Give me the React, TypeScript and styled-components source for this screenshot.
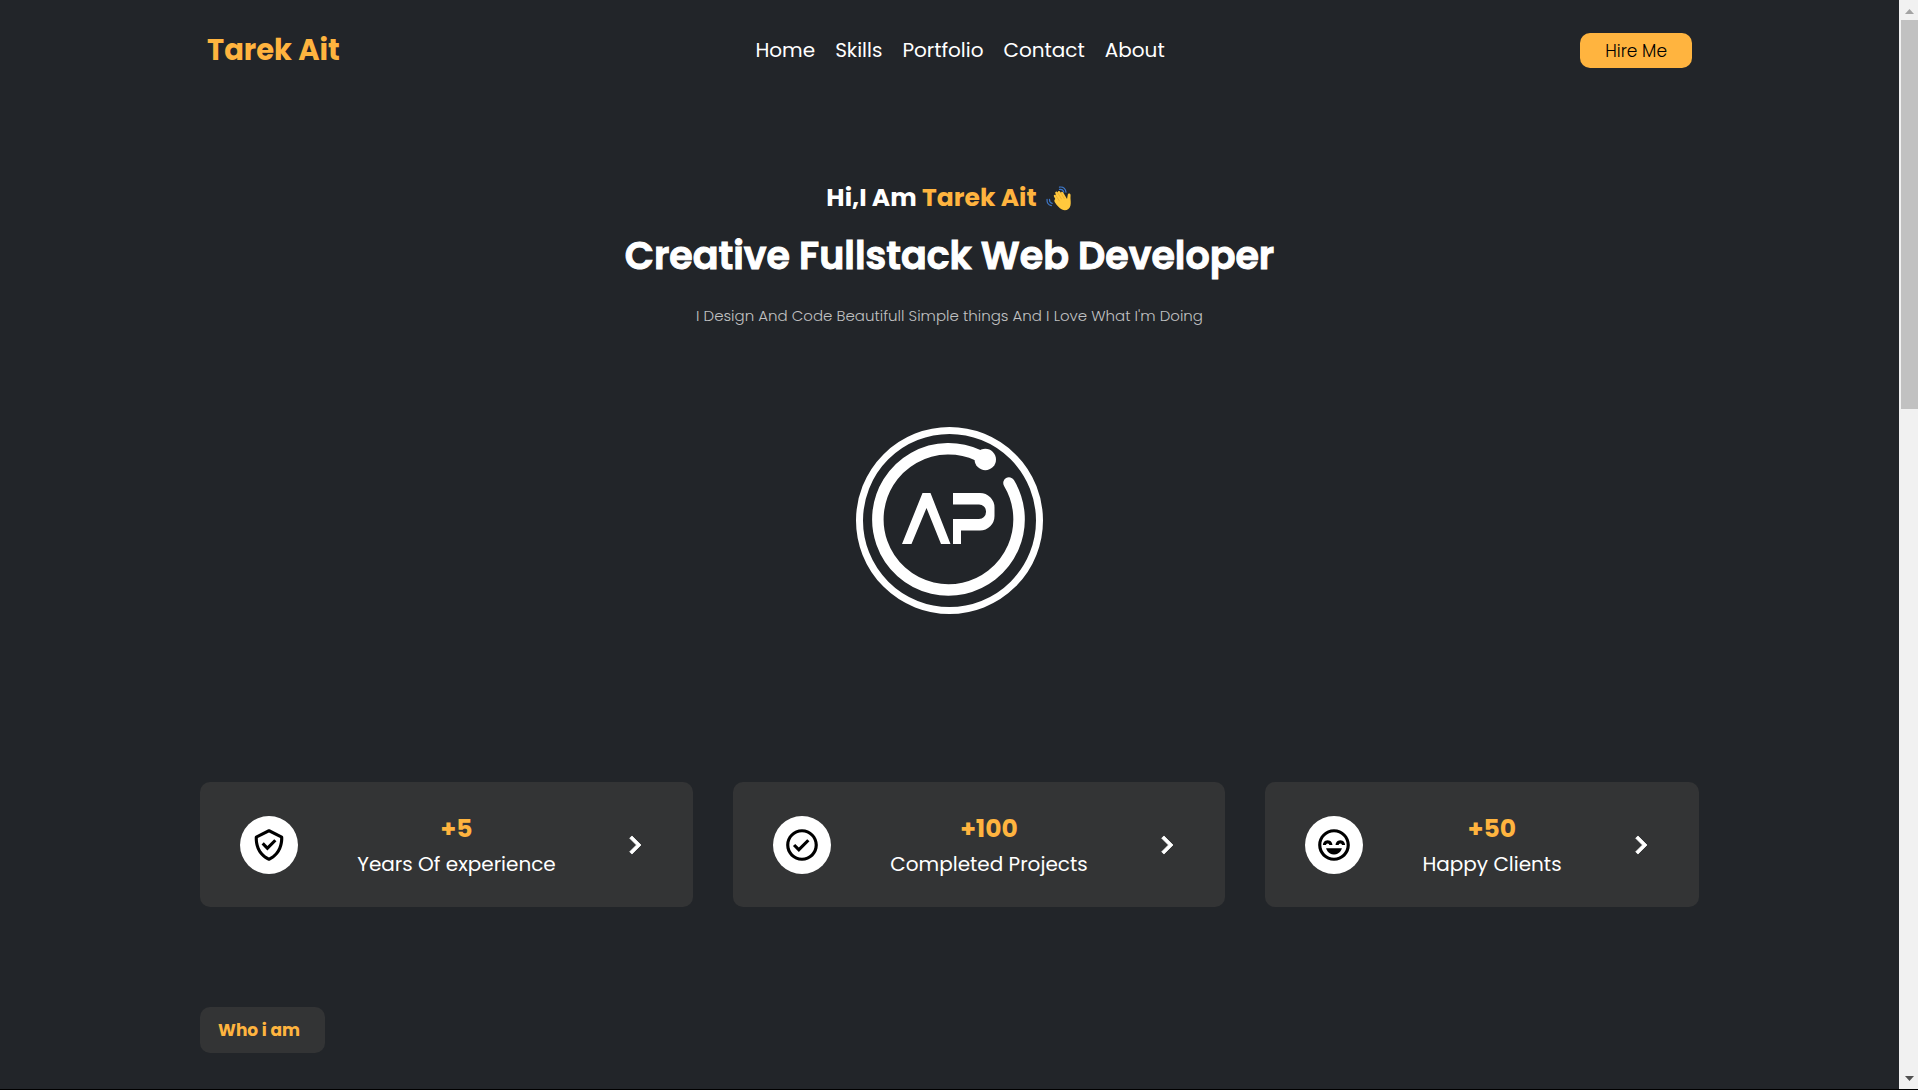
import React from "react";
import styled, { createGlobalStyle } from "styled-components";
import { BiCheckCircle, BiCheckShield, BiChevronRight, BiHappyBeaming } from "react-icons/bi";

const accent = "#ffb43f";

const GlobalStyle = createGlobalStyle`
  *, *::before, *::after { box-sizing: border-box; }
  body {
    margin: 0;
    background: #222529;
    color: #fff;
    font-family: Poppins, Inter, sans-serif;
  }
  h1, h2, p, ul { margin: 0; padding: 0; }
`;

const Shell = styled.div`
  display: flex;
  height: 100vh;
  overflow: hidden;
  border-bottom: 1px solid #000;
`;

const Page = styled.div`
  flex: 1;
  min-width: 0;
  padding: 0 200px;
`;

const Header = styled.header`
  display: flex;
  align-items: center;
  justify-content: space-between;
  height: 100px;
  padding: 0 7px;
`;

const Brand = styled.a`
  color: ${accent};
  font-size: 29px;
  font-weight: 700;
  text-decoration: none;
`;

const NavList = styled.ul`
  display: flex;
  gap: 20px;
  list-style: none;
`;

const NavLink = styled.a`
  color: #fff;
  font-size: 20px;
  text-decoration: none;
`;

const HireButton = styled.button`
  height: 35px;
  padding: 1px 25px 0;
  border: 0;
  border-radius: 10px;
  background: ${accent};
  color: #000;
  font: inherit;
  font-size: 17px;
  font-weight: 300;
`;

const Hero = styled.section`
  display: flex;
  flex-direction: column;
  align-items: center;
  padding-top: 78px;
  text-align: center;
`;

const Greeting = styled.p`
  display: flex;
  align-items: center;
  gap: 8px;
  font-size: 25px;
  line-height: 40px;
  font-weight: 700;
`;

const Name = styled.span`
  color: ${accent};
`;

const Title = styled.h1`
  margin-top: 8px;
  font-size: 38px;
  line-height: 60px;
  font-weight: 600;
  -webkit-text-stroke: 1px currentColor;
`;

const Tagline = styled.p`
  margin-top: 18px;
  color: #c0c1c2;
  font-size: 15px;
  line-height: 24px;
  font-weight: 300;
`;

const LogoMark = styled.svg`
  width: 188px;
  height: 188px;
  margin-top: 99px;
`;

const Stats = styled.section`
  display: grid;
  grid-template-columns: 493fr 492fr 434fr;
  gap: 40px;
  margin-top: 167px;
`;

const StatCard = styled.article`
  display: flex;
  align-items: center;
  justify-content: space-between;
  height: 125px;
  padding: 0 40px;
  border-radius: 10px;
  background: #333435;
`;

const IconDisc = styled.span`
  display: grid;
  place-items: center;
  width: 58px;
  height: 58px;
  border-radius: 50%;
  background: #fff;
  color: #000;
`;

const StatText = styled.div`
  text-align: center;
`;

const StatValue = styled.h2`
  color: ${accent};
  font-size: 25px;
  line-height: 38px;
  font-weight: 700;
`;

const StatLabel = styled.p`
  font-size: 20px;
  line-height: 32px;
`;

const Chevron = styled(BiChevronRight)`
  stroke: currentColor;
  stroke-width: 0.5px;
`;

const SectionTag = styled.h2`
  width: max-content;
  margin-top: 100px;
  padding: 0 25px 0 18px;
  border-radius: 10px;
  background: #333435;
  color: ${accent};
  font-size: 17px;
  line-height: 46px;
  font-weight: 700;
`;

const ScrollTrack = styled.div`
  display: flex;
  flex-direction: column;
  justify-content: space-between;
  width: 19px;
  padding-left: 2px;
  background: #f1f1f1;
`;

const ScrollArrow = styled.svg`
  width: 17px;
  height: 20px;
`;

const ScrollThumb = styled.div`
  height: 389px;
  margin-bottom: auto;
  background: #c1c1c1;
`;

const WaveIcon = styled.svg`
  width: 28px;
  height: 28px;
`;

const links = ["Home", "Skills", "Portfolio", "Contact", "About"];

const stats = [
  { value: "+5", label: "Years Of experience", Icon: BiCheckShield },
  { value: "+100", label: "Completed Projects", Icon: BiCheckCircle },
  { value: "+50", label: "Happy Clients", Icon: BiHappyBeaming },
];

function WavingHand() {
  return (
    <WaveIcon viewBox="0 -1 30 30" role="img" aria-label="Waving hand">
      <g transform="translate(3.8 .6)">
        <path
          d="M7.2 14.4 5.8 11.9c-.8-1.6 1.2-2.7 2.1-1.2L7.3 8.2c-.7-1.7 1.6-2.6 2.4-1L10 7.7c-.5-1.7 1.7-2.5 2.5-.9l.9 1.5c-.4-1.5 1.6-2.2 2.3-.8l4.1 7 .8-4.7c.4-2 3.1-1.6 3 .4l-.1 3.2c.1 2.7.6 5.1 0 8-1 4.4-5.2 6.4-9.1 4.4-3.1-1.600-5.300-4.600-7.500-7.700-1-1.500-.9-2.600.3-3.700z"
          fill="#ffc83d"
        />
        <path d="m9.9 8 3.9 6.3M13.3 8l3.5 6M8 11l3.6 5.5" fill="none" stroke="#e5a52c" strokeWidth=".7" strokeLinecap="round" />
      </g>
      <path
        d="M15.5 4.800c2.500-.4 4 .8 4.600 3M15.500 2.300c4-.5 6.500 1.500 7 5.500M2.200 15.500c-.3 3.700 1.300 5.900 4.600 6.700M4.800 15.500c-.1 2.200.9 3.700 2.900 4.300"
        fill="none"
        stroke="#3f78c8"
        strokeWidth="1.3"
        strokeLinecap="round"
      />
    </WaveIcon>
  );
}

function Logo() {
  return (
    <LogoMark viewBox="0 0 188 188" role="img" aria-label="AP logo">
      <circle cx="93.5" cy="93.5" r="90" fill="none" stroke="#fff" strokeWidth="7" />
      <path d="M122 28.2A70.6 70.6 0 1 0 153 56" fill="none" stroke="#fff" strokeWidth="11.5" strokeLinecap="round" />
      <circle cx="129.3" cy="32.5" r="10.7" fill="#fff" />
      <path d="M46 117 66.500 66H74.500L94.500 117H85L70.500 81 55.500 117z" fill="#fff" />
      <path d="M97 66H124a14.500 14.500 0 0 1 14.500 14.500V89A14.500 14.500 0 0 1 124 103.500H105V117H97V92H123a7 7 0 0 0 7-7V84.500a7 7 0 0 0-7-7H97z" fill="#fff" />
    </LogoMark>
  );
}

export default function App() {
  return (
    <>
      <GlobalStyle />
      <Shell>
        <Page>
          <Header>
            <Brand href="#home">Tarek Ait</Brand>
            <nav>
              <NavList>
                {links.map((label) => (
                  <li key={label}>
                    <NavLink href={`#${label.toLowerCase()}`}>{label}</NavLink>
                  </li>
                ))}
              </NavList>
            </nav>
            <HireButton type="button">Hire Me</HireButton>
          </Header>
          <main>
            <Hero>
              <Greeting>
                <span>
                  Hi,I Am <Name>Tarek Ait</Name>
                </span>
                <WavingHand />
              </Greeting>
              <Title>Creative Fullstack Web Developer</Title>
              <Tagline>I Design And Code Beautifull Simple things And I Love What I'm Doing</Tagline>
              <Logo />
            </Hero>
            <Stats>
              {stats.map(({ value, label, Icon }) => (
                <StatCard key={label}>
                  <IconDisc>
                    <Icon size={38} />
                  </IconDisc>
                  <StatText>
                    <StatValue>{value}</StatValue>
                    <StatLabel>{label}</StatLabel>
                  </StatText>
                  <Chevron size={38} />
                </StatCard>
              ))}
            </Stats>
            <SectionTag>Who i am</SectionTag>
          </main>
        </Page>
        <ScrollTrack aria-hidden="true">
          <ScrollArrow viewBox="0 0 17 20">
            <path d="M4 14h9L8.500 9z" fill="#a3a3a3" />
          </ScrollArrow>
          <ScrollThumb />
          <ScrollArrow viewBox="0 0 17 20">
            <path d="M4 7h9l-4.500 5z" fill="#505050" />
          </ScrollArrow>
        </ScrollTrack>
      </Shell>
    </>
  );
}
